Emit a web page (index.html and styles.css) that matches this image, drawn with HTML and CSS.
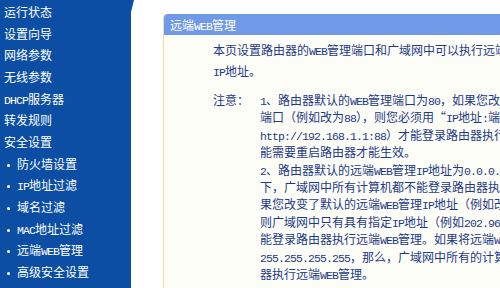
FILE: index.html
```html
<!DOCTYPE html>
<html lang="zh-CN">
<head>
<meta charset="utf-8">
<title>远端WEB管理</title>
<link rel="stylesheet" href="styles.css">
</head>
<body>
<div class="page">
  <nav class="sidebar">
    <ul class="menu">
      <li class="item">运行状态</li>
      <li class="item">设置向导</li>
      <li class="item">网络参数</li>
      <li class="item">无线参数</li>
      <li class="item"><span class="en">DHCP</span>服务器</li>
      <li class="item">转发规则</li>
      <li class="item">安全设置</li>
      <li class="item sub">防火墙设置</li>
      <li class="item sub"><span class="en">IP</span>地址过滤</li>
      <li class="item sub">域名过滤</li>
      <li class="item sub"><span class="en">MAC</span>地址过滤</li>
      <li class="item sub">远端<span class="en">WEB</span>管理</li>
      <li class="item sub">高级安全设置</li>
    </ul>
  </nav>
  <main class="main">
    <section class="panel">
      <header class="panel-head">远端<span class="en">WEB</span>管理</header>
      <div class="panel-body">
        <div class="intro">
          <div class="line">本页设置路由器的<span class="en">WEB</span>管理端口和广域网中可以执行远端<span class="en">WEB</span>管理的计算机的</div>
          <div class="line"><span class="en">IP</span>地址。</div>
        </div>
        <div class="notes">
          <div class="label">注意：</div>
          <div class="note-text">
            <div class="line"><span class="en">1</span>、路由器默认的<span class="en">WEB</span>管理端口为<span class="en">80</span>，如果您改变了默认的<span class="en">WEB</span>管理</div>
            <div class="line">端口（例如改为<span class="en">88</span>），则您必须用“<span class="en">IP</span>地址<span class="en">:</span>端口”的方式（例如</div>
            <div class="line"><span class="en">http://192.168.1.1:88</span>）才能登录路由器执行<span class="en">WEB</span>界面管理。此项设置可</div>
            <div class="line">能需要重启路由器才能生效。</div>
            <div class="line"><span class="en">2</span>、路由器默认的远端<span class="en">WEB</span>管理<span class="en">IP</span>地址为<span class="en">0.0.0.0</span>，在此默认状态</div>
            <div class="line">下，广域网中所有计算机都不能登录路由器执行远端<span class="en">WEB</span>管理。如</div>
            <div class="line">果您改变了默认的远端<span class="en">WEB</span>管理<span class="en">IP</span>地址（例如改为<span class="en">202.96.12.8</span>），</div>
            <div class="line">则广域网中只有具有指定<span class="en">IP</span>地址（例如<span class="en">202.96.12.8</span>）的计算机才</div>
            <div class="line">能登录路由器执行远端<span class="en">WEB</span>管理。如果将远端<span class="en">WEB</span>管理<span class="en">IP</span>地址设为</div>
            <div class="line"><span class="en">255.255.255.255</span>，那么，广域网中所有的计算机都可以登录路由</div>
            <div class="line">器执行远端<span class="en">WEB</span>管理。</div>
          </div>
        </div>
      </div>
    </section>
  </main>
</div>
</body>
</html>
```
FILE: styles.css
```css
html, body {
  margin: 0;
  padding: 0;
  background: #ffffff;
}
body {
  width: 500px;
  height: 288px;
  overflow: hidden;
  font-family: "Noto Sans CJK SC", "DejaVu Sans", sans-serif;
  font-size: 12px;
}
.page {
  display: flex;
  width: 500px;
  height: 288px;
  overflow: hidden;
}
.en {
  font-family: "Liberation Mono", monospace;
  font-size: 11.5px;
  letter-spacing: -0.9px;
}
.sidebar {
  flex: 0 0 134px;
  height: 288px;
  background: #0b4ea3;
  clip-path: polygon(0 0, 134px 0, 131px 12px, 131px 100%, 0 100%);
}
.menu {
  list-style: none;
  margin: 0;
  padding: 1px 0 0 4px;
}
.item {
  height: 21.67px;
  line-height: 21.67px;
  color: #ffffff;
  white-space: nowrap;
}
.item.sub {
  padding-left: 3px;
}
.item.sub::before {
  content: "";
  display: inline-block;
  width: 3px;
  height: 3px;
  border-radius: 50%;
  background: #ffffff;
  vertical-align: middle;
  margin-right: 7px;
}
.main {
  flex: 1;
  min-width: 0;
  padding: 14px 0 0 29px;
}
.panel {
  height: 300px;
  background: #fdfdf8;
  border-left: 1px solid #f0d7a7;
  border-top-left-radius: 4px;
  overflow: hidden;
}
.panel-head {
  height: 21px;
  line-height: 21px;
  background: #7099e8;
  color: #ffffff;
  padding-left: 6px;
  border-top-left-radius: 4px;
  white-space: nowrap;
}
.panel-body {
  padding: 4px 0 0 49px;
  color: #1d3a86;
}
.line {
  white-space: nowrap;
}
.intro .line {
  height: 21px;
  line-height: 21px;
}
.notes {
  display: flex;
  margin-top: 10px;
}
.label {
  flex: 0 0 47px;
  line-height: 17.4px;
}
.note-text .line {
  height: 17.4px;
  line-height: 17.4px;
}
```
